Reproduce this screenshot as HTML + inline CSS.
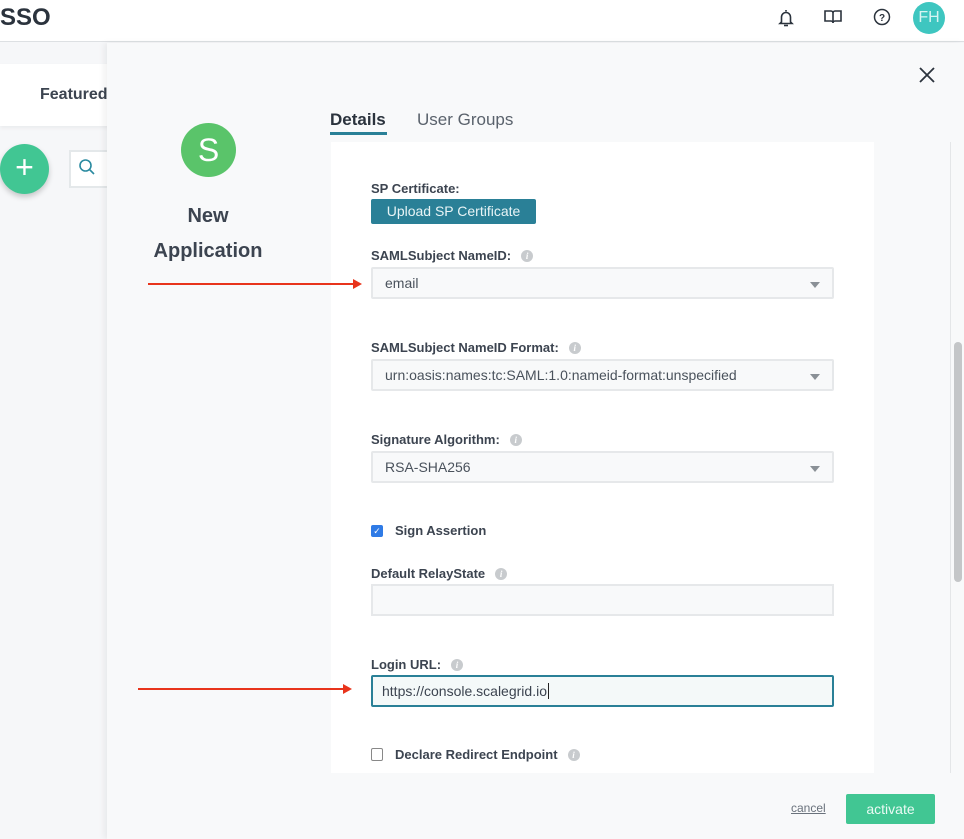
<!DOCTYPE html>
<html><head><meta charset="utf-8"><style>
*{box-sizing:border-box;margin:0;padding:0}
body{width:964px;height:839px;overflow:hidden;background:#f6f7f9;font-family:"Liberation Sans",sans-serif;color:#3c4450;position:relative}
.abs{position:absolute}
.hdr{left:0;top:0;width:964px;height:42px;background:#fff;border-bottom:1px solid #dde0e3}
.lbl{font-size:13px;font-weight:bold;color:#3c4450;left:371px}
.info{display:inline-block;width:12px;height:12px;border-radius:50%;background:#c8cbce;color:#fff;font-size:9px;font-style:italic;text-align:center;line-height:12px;font-family:"Liberation Serif",serif;font-weight:bold;vertical-align:1px;margin-left:10px}
.sel{left:371px;width:463px;height:32px;background:#f8f9fa;border:2px solid #e6e8ea;border-radius:2px;font-size:14px;color:#4a525c;padding:6px 0 0 12px}
.sel:after{content:"";position:absolute;right:12px;top:13px;border-left:5px solid transparent;border-right:5px solid transparent;border-top:6px solid #8a9096}
.arrow{height:2px;background:#e8341c}
.arrow:after{content:"";position:absolute;right:-2px;top:-4px;border-top:5px solid transparent;border-bottom:5px solid transparent;border-left:9px solid #e8341c}
</style></head><body>
<div class="abs hdr"></div>
<div class="abs" style="left:0;top:4px;font-size:24px;font-weight:bold;color:#2b333d">SSO</div>
<svg class="abs" style="left:777px;top:8px" width="18" height="20" viewBox="0 0 18 20" fill="none" stroke="#2b333d" stroke-width="1.6"><path d="M9 2v1.5M4.5 14V9a4.5 4.5 0 0 1 9 0v5l1.5 1.5H3z"/><path d="M7 17.5h4"/></svg>
<svg class="abs" style="left:823px;top:9px" width="20" height="16" viewBox="0 0 20 16" fill="none" stroke="#2b333d" stroke-width="1.6"><path d="M2 2h6a2 2 0 0 1 2 2v10a2 2 0 0 0-2-2H2zM18 2h-6a2 2 0 0 0-2 2v10a2 2 0 0 1 2-2h6z"/></svg>
<svg class="abs" style="left:873px;top:8px" width="18" height="18" viewBox="0 0 18 18"><circle cx="9" cy="9" r="7.5" fill="none" stroke="#2b333d" stroke-width="1.5"/><text x="9" y="13" font-size="10" text-anchor="middle" font-weight="bold" fill="#2b333d" font-family="Liberation Sans">?</text></svg>
<div class="abs" style="left:913px;top:2px;width:32px;height:32px;border-radius:50%;background:#3ec6c0;color:#d8f4f2;font-size:16px;text-align:center;line-height:32px">FH</div>

<div class="abs" style="left:0;top:64px;width:120px;height:62px;background:#fff;box-shadow:0 2px 4px rgba(0,0,0,.05)"></div>
<div class="abs" style="left:40px;top:86px;font-size:16px;font-weight:bold;color:#3c4450;width:68px;overflow:hidden;white-space:nowrap">Featured</div>
<div class="abs" style="left:0;top:144px;width:49px;height:50px;border-radius:50%;background:#41c693;box-shadow:0 3px 6px rgba(0,0,0,.2);color:#fff;font-size:32px;text-align:center;line-height:46px">+</div>
<div class="abs" style="left:69px;top:150px;width:50px;height:38px;background:#fff;border:2px solid #e4e8ea"></div>
<svg class="abs" style="left:78px;top:158px" width="18" height="18" viewBox="0 0 18 18" fill="none" stroke="#2a8aa0" stroke-width="1.6"><circle cx="7.5" cy="7.5" r="5.5"/><path d="M11.5 11.5l4.5 4.5"/></svg>

<div class="abs" style="left:107px;top:43px;width:857px;height:796px;background:#f8f9fa;box-shadow:-3px 0 6px rgba(0,0,0,.06)"></div>
<svg class="abs" style="left:918px;top:66px" width="18" height="18" viewBox="0 0 18 18" stroke="#2b333d" stroke-width="1.8"><path d="M2 2l14 14M16 2L2 16"/></svg>
<div class="abs" style="left:181px;top:123px;width:55px;height:54px;border-radius:50%;background:#5ac46a;color:#fff;font-size:32px;text-align:center;line-height:54px">S</div>
<div class="abs" style="left:107px;top:199px;width:202px;text-align:center;font-size:20px;font-weight:bold;color:#3c4450;line-height:35px">New<br>Application</div>

<div class="abs" style="left:330px;top:110px;font-size:17px;font-weight:bold;color:#2b333d">Details</div>
<div class="abs" style="left:330px;top:132px;width:57px;height:3px;background:#2a8097"></div>
<div class="abs" style="left:417px;top:110px;font-size:17px;color:#5a626c">User Groups</div>

<div class="abs" style="left:331px;top:142px;width:543px;height:631px;background:#fff"></div>
<div class="abs" style="left:950px;top:142px;width:1px;height:631px;background:#e4e6e8"></div>
<div class="abs" style="left:954px;top:342px;width:8px;height:240px;border-radius:4px;background:#c4c6c8"></div>

<div class="abs lbl" style="top:181px">SP Certificate:</div>
<div class="abs" style="left:371px;top:199px;width:165px;height:25px;background:#2a8097;border-radius:2px;color:#e8f4f6;font-size:14px;text-align:center;line-height:25px">Upload SP Certificate</div>

<div class="abs lbl" style="top:248px">SAMLSubject NameID:<span class="info">i</span></div>
<div class="abs sel" style="top:267px">email</div>
<div class="abs arrow" style="left:148px;top:283px;width:212px"></div>

<div class="abs lbl" style="top:340px">SAMLSubject NameID Format:<span class="info">i</span></div>
<div class="abs sel" style="top:359px">urn:oasis:names:tc:SAML:1.0:nameid-format:unspecified</div>

<div class="abs lbl" style="top:432px">Signature Algorithm:<span class="info">i</span></div>
<div class="abs sel" style="top:451px">RSA-SHA256</div>

<div class="abs" style="left:371px;top:525px;width:12px;height:12px;border-radius:2px;background:#2f7be6;color:#fff;font-size:9px;text-align:center;line-height:12px">✓</div>
<div class="abs lbl" style="left:395px;top:523px">Sign Assertion</div>

<div class="abs lbl" style="top:566px">Default RelayState<span class="info">i</span></div>
<div class="abs" style="left:371px;top:584px;width:463px;height:32px;background:#f8f9fa;border:2px solid #e6e8ea"></div>

<div class="abs lbl" style="top:657px">Login URL:<span class="info">i</span></div>
<div class="abs" style="left:371px;top:675px;width:463px;height:32px;background:#f4f9f9;border:2px solid #2a8097;border-radius:2px;font-size:14px;color:#3c4450;padding:6px 0 0 9px">https://console.scalegrid.io<span style="border-left:1px solid #222;margin-left:1px"></span></div>
<div class="abs arrow" style="left:138px;top:688px;width:212px"></div>

<div class="abs" style="left:371px;top:748px;width:12px;height:13px;border-radius:2px;border:1px solid #888;background:#fff"></div>
<div class="abs lbl" style="left:395px;top:747px">Declare Redirect Endpoint<span class="info">i</span></div>

<div class="abs" style="left:791px;top:801px;font-size:12px;color:#6a727c;text-decoration:underline">cancel</div>
<div class="abs" style="left:846px;top:794px;width:89px;height:30px;background:#41c693;border-radius:2px;color:#eafaf4;font-size:14px;text-align:center;line-height:30px">activate</div>
</body></html>
